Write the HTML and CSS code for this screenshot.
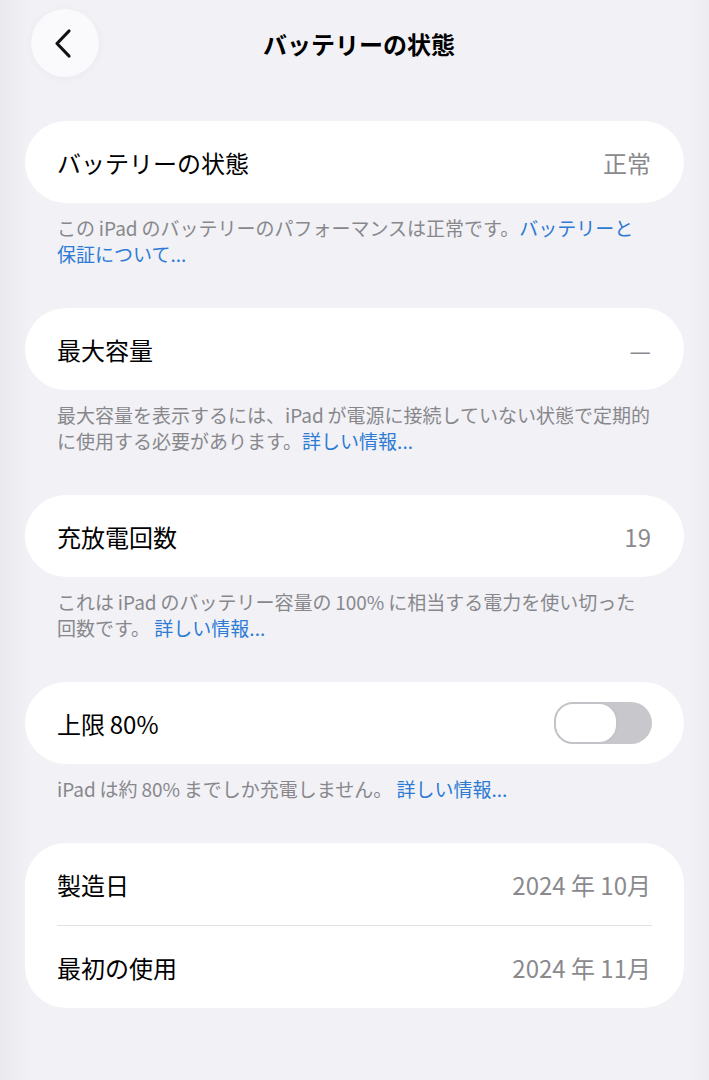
FILE: index.html
```html
<!DOCTYPE html>
<html lang="ja">
<head>
    <meta charset="UTF-8">
    <meta name="viewport" content="width=device-width, initial-scale=1.0">
    <title>バッテリーの状態</title>
    <link rel="stylesheet" href="styles.css">
</head>
<body>

    <div class="header">
        <div class="back-button">
            <svg width="20" height="31" viewBox="0 0 20 31">
                <path d="M16 3 L4 15.5 L16 28" fill="none" stroke="#111" stroke-width="3.2" stroke-linecap="round" stroke-linejoin="round"/>
            </svg>
        </div>
        <h1 class="title">バッテリーの状態</h1>
        <div></div>
    </div>

    <div class="content">
        <div class="section">
            <div class="card">
                <div class="row">
                    <span class="label">バッテリーの状態</span>
                    <span class="value">正常</span>
                </div>
            </div>
            <p class="footer">この&thinsp;iPad&thinsp;のバッテリーのパフォーマンスは正常です。<a class="link">バッテリーと<br>保証について...</a></p>
        </div>

        <div class="section">
            <div class="card">
                <div class="row">
                    <span class="label">最大容量</span>
                    <span class="value">—</span>
                </div>
            </div>
            <p class="footer">最大容量を表示するには、iPad&thinsp;が電源に接続していない状態で定期的<br>に使用する必要があります。<a class="link">詳しい情報...</a></p>
        </div>

        <div class="section">
            <div class="card">
                <div class="row">
                    <span class="label">充放電回数</span>
                    <span class="value">19</span>
                </div>
            </div>
            <p class="footer">これは&thinsp;iPad&thinsp;のバッテリー容量の&thinsp;100%&thinsp;に相当する電力を使い切った<br>回数です。 <a class="link">詳しい情報...</a></p>
        </div>

        <div class="section">
            <div class="card">
                <div class="row">
                    <span class="label">上限&thinsp;80%</span>
                    <span class="toggle"><span class="knob"></span></span>
                </div>
            </div>
            <p class="footer">iPad&thinsp;は約&thinsp;80%&thinsp;までしか充電しません。 <a class="link">詳しい情報...</a></p>
        </div>

        <div class="section">
            <div class="card">
                <div class="row">
                    <span class="label">製造日</span>
                    <span class="value">2024 年 10月</span>
                </div>
                <div class="separator"></div>
                <div class="row">
                    <span class="label">最初の使用</span>
                    <span class="value">2024 年 11月</span>
                </div>
            </div>
        </div>
    </div>

</body>
</html>
```

FILE: styles.css
```css
body {
    font-family: "Noto Sans CJK JP", "Noto Sans", sans-serif;
    background: linear-gradient(to right, #e9e9ee 0, #f1f1f6 30px, #f1f1f6 690px, #ececf1 709px);
    margin: 0;
    padding: 0;
    color: #000;
}

.header {
    display: grid;
    grid-template-columns: 68px 1fr 68px;
    align-items: center;
    padding: 9px 30px 0 31px;
    height: 68px;
}

.back-button {
    width: 68px;
    height: 68px;
    border-radius: 50%;
    background-color: #fafafc;
    box-shadow: 0 1px 10px rgba(0, 0, 0, 0.04);
    display: flex;
    align-items: center;
    justify-content: center;
}

.back-button svg {
    margin-left: -4px;
}

.title {
    margin: 0;
    text-align: center;
    font-size: 24px;
    font-weight: 700;
    padding-left: 8px;
}

.content {
    padding: 44px 25px 0 25px;
}

.section {
    margin-bottom: 41px;
}

.card {
    background-color: #fff;
    border-radius: 41px;
    padding: 0 33px 0 32px;
}

.row {
    height: 82px;
    display: flex;
    align-items: center;
    justify-content: space-between;
}

.label {
    font-size: 24px;
}

.value {
    font-size: 24px;
    color: #8a8a8e;
}

.separator {
    height: 1px;
    background-color: #e2e2e6;
    margin-right: -1px;
}

.footer {
    margin: 0;
    padding: 12px 20px 0 32px;
    font-size: 19px;
    line-height: 26px;
    color: #88888c;
    white-space: nowrap;
}

.link {
    color: #2d7bd4;
}

.toggle {
    width: 98px;
    height: 42px;
    border-radius: 21px;
    background-color: #c8c8cc;
    display: flex;
    align-items: center;
    margin-right: -1px;
}

.knob {
    width: 60px;
    height: 38px;
    border-radius: 19px;
    background-color: #fff;
    border: 2px solid #c4c4c8;
}
```
